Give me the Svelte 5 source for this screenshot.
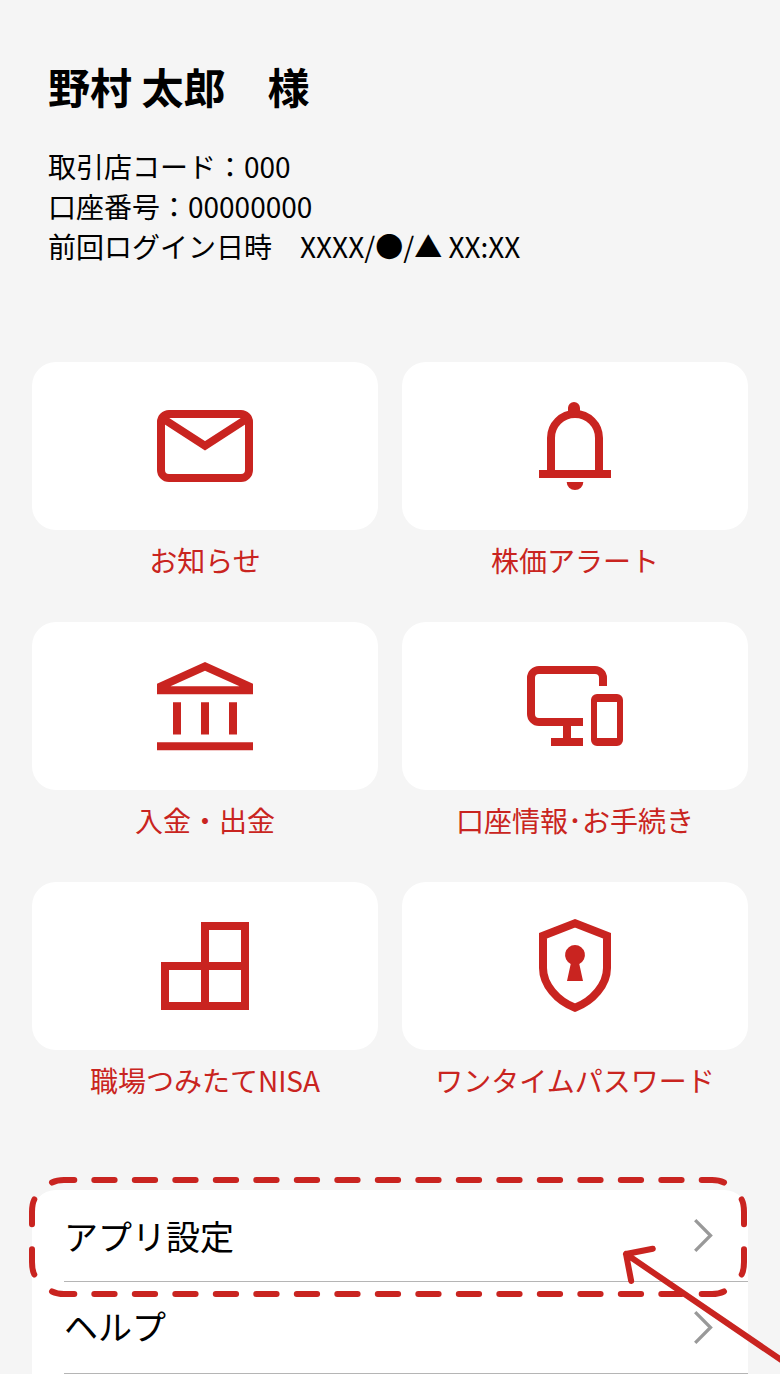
<script>
  const tiles = [
    { icon: 'mail', label: 'お知らせ' },
    { icon: 'bell', label: '株価アラート' },
    { icon: 'bank', label: '入金・出金' },
    { icon: 'devices', label: '口座情報･お手続き' },
    { icon: 'blocks', label: '職場つみたてNISA' },
    { icon: 'shield', label: 'ワンタイムパスワード' },
  ];
  const rows = ['アプリ設定', 'ヘルプ'];
</script>

<main class="page">
  <header>
    <h1>野村 太郎　様</h1>
    <div class="info">
      <p>取引店コード：000</p>
      <p>口座番号：00000000</p>
      <p>前回ログイン日時　XXXX/●/▲ XX:XX</p>
    </div>
  </header>

  <section class="grid">
    {#each tiles as tile}
      <div class="tile">
        <div class="card">
          <svg class="icon" width="96" height="96" viewBox="0 0 96 96">
            {#if tile.icon === 'mail'}
              <rect class="line" x="4" y="16" width="88" height="64" rx="8" />
              <path class="line" d="M5 20L48 47.800L91 20" />
            {:else if tile.icon === 'bell'}
              <path class="line" d="M24 76V40a24 24 0 0 1 48 0V76M12 76H84" />
              <path class="solid" d="M41 16V10a6 6 0 0 1 12 0v6zM39.7 84H56.3a8.3 8 0 0 1-16.6 0z" />
            {:else if tile.icon === 'bank'}
              <path class="solid" fill-rule="evenodd" d="M0 25.8L48 4L96 25.8V36.3H0zM13.5 28.2H82.500L48 12.700z" />
              <path class="solid" d="M16 44.300h8v32.300h-8zM44 44.300h8v32.300h-8zM72 44.300h8v32.300h-8zM0 84.300h96v8H0z" />
            {:else if tile.icon === 'devices'}
              <path class="line" d="M76 28V20a8 8 0 0 0-8-8H12a8 8 0 0 0-8 8v36a8 8 0 0 0 8 8H56M40 64V84M24 84H56" />
              <path class="solid" fill-rule="evenodd" d="M70 36H90a6 6 0 0 1 6 6V82a6 6 0 0 1-6 6H70a6 6 0 0 1-6-6V42a6 6 0 0 1 6-6zM70 44V80H90V44z" />
            {:else if tile.icon === 'blocks'}
              <path class="line" d="M8 48H88M48 88V8H88V88H8V48" />
              <path class="solid" d="M4 44h8v8H4zM44 4h8v8h-8z" />
            {:else}
              <path class="line" d="M48 5.200L80 17.700V50C80 66.500 66 83 48 89.700C30 83 16 66.500 16 50V17.700z" />
              <path class="solid" d="M48 27a10 10 0 0 1 4.300 19L56 63H40L43.700 46A10 10 0 0 1 48 27z" />
            {/if}
          </svg>
        </div>
        <div class="label">{tile.label}</div>
      </div>
    {/each}
  </section>

  <section class="list">
    {#each rows as row}
      <div class="row">
        <span>{row}</span>
        <svg width="20" height="34" viewBox="0 0 20 34">
          <path class="chevron" d="M2.200 1.200L17.500 16.500L2.200 31.800" />
        </svg>
      </div>
    {/each}
  </section>

  <svg class="callout" width="780" height="214" viewBox="0 1160 780 214">
    <path class="dashes" d="M94.300 1180H682M94.300 1294H682" />
    <path d="M52 1182.500Q57 1180 64 1180H74.300M701.700 1180H712Q719 1180 724 1182.500" />
    <path d="M52 1291.500Q57 1294 64 1294H74.300M701.700 1294H712Q719 1294 724 1291.500" />
    <path d="M34.300 1199.500Q32 1204 32 1212V1224.300M741.700 1199.500Q744 1204 744 1212V1224.300" />
    <path d="M34.300 1274.500Q32 1270 32 1262V1249.300M741.700 1274.500Q744 1270 744 1262V1249.300" />
    <path d="M652.800 1248.800L626 1254L631.200 1281M626 1254L790 1366" />
  </svg>
</main>

<style>
  :global(body) {
    margin: 0;
    background: #f5f5f5;
  }
  .page {
    position: relative;
    box-sizing: border-box;
    width: 780px;
    height: 1374px;
    padding: 56px 32px 0;
    overflow: hidden;
    background: #f5f5f5;
    color: #000;
    font-family: 'Noto Sans CJK JP', sans-serif;
  }
  header {
    height: 306px;
    padding-left: 16px;
  }
  h1 {
    margin: 0 0 30px;
    font-size: 42px;
    line-height: 60px;
    font-weight: 700;
  }
  .info p {
    margin: 0;
    font-size: 28px;
    line-height: 40px;
    white-space: pre;
  }
  .grid {
    display: grid;
    grid-template-columns: 1fr 1fr;
    column-gap: 24px;
    grid-auto-rows: 260px;
  }
  .card {
    display: flex;
    align-items: center;
    justify-content: center;
    height: 168px;
    border-radius: 24px;
    background: #fff;
  }
  .line {
    fill: none;
    stroke: #c92420;
    stroke-width: 8;
  }
  .solid {
    fill: #c92420;
  }
  .label {
    margin-top: 10px;
    text-align: center;
    color: #c92420;
    font-size: 28px;
    line-height: 40px;
    white-space: nowrap;
  }
  .list {
    margin-top: 48px;
    padding-left: 32px;
    border-radius: 24px 24px 0 0;
    background: #fff;
  }
  .row {
    display: flex;
    align-items: center;
    justify-content: space-between;
    box-sizing: border-box;
    height: 92px;
    padding-right: 35px;
    border-bottom: 1px solid #b5b5b5;
    font-size: 34px;
    line-height: 50px;
  }
  .row + .row span {
    padding-bottom: 4px;
  }
  .chevron {
    fill: none;
    stroke: #999;
    stroke-width: 3.300;
  }
  .callout {
    position: absolute;
    left: 0;
    top: 1160px;
  }
  .callout path {
    fill: none;
    stroke: #c92420;
    stroke-width: 6;
    stroke-linecap: round;
    stroke-linejoin: round;
  }
  .callout .dashes {
    stroke-dasharray: 20.300 20.200;
  }
</style>
